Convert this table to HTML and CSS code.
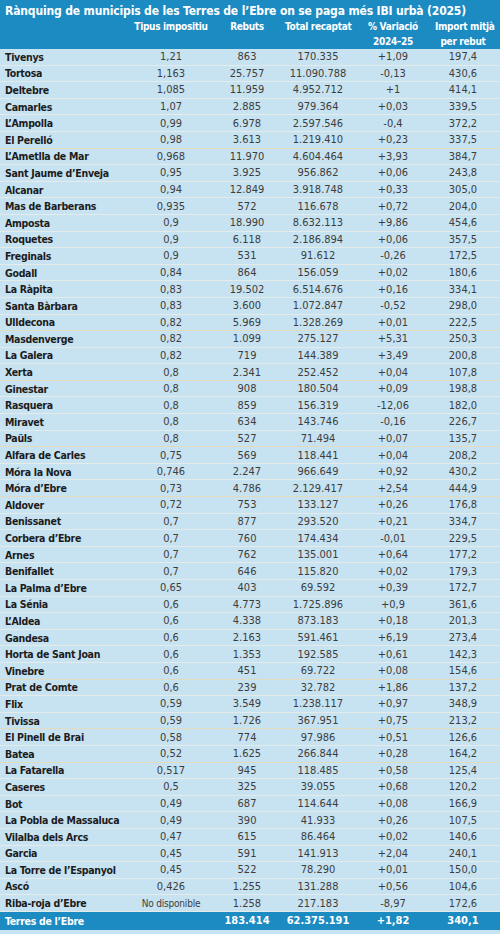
FILE: index.html
```html
<!DOCTYPE html>
<html lang="ca">
<head>
<meta charset="utf-8">
<title>Rànquing IBI urbà Terres de l'Ebre 2025</title>
<link rel="stylesheet" href="styles.css">
</head>
<body>
<div class="ranking">
    <div class="ranking-head">
        <h1 class="ranking-title">Rànquing de municipis de les Terres de l’Ebre on se paga més IBI urbà (2025)</h1>
        <div class="ranking-row ranking-cols">
            <span></span>
            <span>Tipus impositiu</span>
            <span>Rebuts</span>
            <span>Total recaptat</span>
            <span>% Variació<br>2024–25</span>
            <span>Import mitjà<br>per rebut</span>
        </div>
    </div>

    <div class="ranking-body">
        <div class="ranking-row"><span class="name">Tivenys</span><span>1,21</span><span>863</span><span>170.335</span><span>+1,09</span><span>197,4</span></div>
        <div class="ranking-row"><span class="name">Tortosa</span><span>1,163</span><span>25.757</span><span>11.090.788</span><span>-0,13</span><span>430,6</span></div>
        <div class="ranking-row"><span class="name">Deltebre</span><span>1,085</span><span>11.959</span><span>4.952.712</span><span>+1</span><span>414,1</span></div>
        <div class="ranking-row"><span class="name">Camarles</span><span>1,07</span><span>2.885</span><span>979.364</span><span>+0,03</span><span>339,5</span></div>
        <div class="ranking-row"><span class="name">L’Ampolla</span><span>0,99</span><span>6.978</span><span>2.597.546</span><span>-0,4</span><span>372,2</span></div>
        <div class="ranking-row tan"><span class="name">El Perelló</span><span>0,98</span><span>3.613</span><span>1.219.410</span><span>+0,23</span><span>337,5</span></div>
        <div class="ranking-row"><span class="name">L’Ametlla de Mar</span><span>0,968</span><span>11.970</span><span>4.604.464</span><span>+3,93</span><span>384,7</span></div>
        <div class="ranking-row"><span class="name">Sant Jaume d’Enveja</span><span>0,95</span><span>3.925</span><span>956.862</span><span>+0,06</span><span>243,8</span></div>
        <div class="ranking-row"><span class="name">Alcanar</span><span>0,94</span><span>12.849</span><span>3.918.748</span><span>+0,33</span><span>305,0</span></div>
        <div class="ranking-row"><span class="name">Mas de Barberans</span><span>0,935</span><span>572</span><span>116.678</span><span>+0,72</span><span>204,0</span></div>
        <div class="ranking-row"><span class="name">Amposta</span><span>0,9</span><span>18.990</span><span>8.632.113</span><span>+9,86</span><span>454,6</span></div>
        <div class="ranking-row"><span class="name">Roquetes</span><span>0,9</span><span>6.118</span><span>2.186.894</span><span>+0,06</span><span>357,5</span></div>
        <div class="ranking-row"><span class="name">Freginals</span><span>0,9</span><span>531</span><span>91.612</span><span>-0,26</span><span>172,5</span></div>
        <div class="ranking-row"><span class="name">Godall</span><span>0,84</span><span>864</span><span>156.059</span><span>+0,02</span><span>180,6</span></div>
        <div class="ranking-row"><span class="name">La Ràpita</span><span>0,83</span><span>19.502</span><span>6.514.676</span><span>+0,16</span><span>334,1</span></div>
        <div class="ranking-row"><span class="name">Santa Bàrbara</span><span>0,83</span><span>3.600</span><span>1.072.847</span><span>-0,52</span><span>298,0</span></div>
        <div class="ranking-row tan"><span class="name">Ulldecona</span><span>0,82</span><span>5.969</span><span>1.328.269</span><span>+0,01</span><span>222,5</span></div>
        <div class="ranking-row"><span class="name">Masdenverge</span><span>0,82</span><span>1.099</span><span>275.127</span><span>+5,31</span><span>250,3</span></div>
        <div class="ranking-row"><span class="name">La Galera</span><span>0,82</span><span>719</span><span>144.389</span><span>+3,49</span><span>200,8</span></div>
        <div class="ranking-row tan"><span class="name">Xerta</span><span>0,8</span><span>2.341</span><span>252.452</span><span>+0,04</span><span>107,8</span></div>
        <div class="ranking-row"><span class="name">Ginestar</span><span>0,8</span><span>908</span><span>180.504</span><span>+0,09</span><span>198,8</span></div>
        <div class="ranking-row"><span class="name">Rasquera</span><span>0,8</span><span>859</span><span>156.319</span><span>-12,06</span><span>182,0</span></div>
        <div class="ranking-row"><span class="name">Miravet</span><span>0,8</span><span>634</span><span>143.746</span><span>-0,16</span><span>226,7</span></div>
        <div class="ranking-row tan"><span class="name">Paüls</span><span>0,8</span><span>527</span><span>71.494</span><span>+0,07</span><span>135,7</span></div>
        <div class="ranking-row"><span class="name">Alfara de Carles</span><span>0,75</span><span>569</span><span>118.441</span><span>+0,04</span><span>208,2</span></div>
        <div class="ranking-row"><span class="name">Móra la Nova</span><span>0,746</span><span>2.247</span><span>966.649</span><span>+0,92</span><span>430,2</span></div>
        <div class="ranking-row tan"><span class="name">Móra d’Ebre</span><span>0,73</span><span>4.786</span><span>2.129.417</span><span>+2,54</span><span>444,9</span></div>
        <div class="ranking-row"><span class="name">Aldover</span><span>0,72</span><span>753</span><span>133.127</span><span>+0,26</span><span>176,8</span></div>
        <div class="ranking-row"><span class="name">Benissanet</span><span>0,7</span><span>877</span><span>293.520</span><span>+0,21</span><span>334,7</span></div>
        <div class="ranking-row"><span class="name">Corbera d’Ebre</span><span>0,7</span><span>760</span><span>174.434</span><span>-0,01</span><span>229,5</span></div>
        <div class="ranking-row"><span class="name">Arnes</span><span>0,7</span><span>762</span><span>135.001</span><span>+0,64</span><span>177,2</span></div>
        <div class="ranking-row"><span class="name">Benifallet</span><span>0,7</span><span>646</span><span>115.820</span><span>+0,02</span><span>179,3</span></div>
        <div class="ranking-row"><span class="name">La Palma d’Ebre</span><span>0,65</span><span>403</span><span>69.592</span><span>+0,39</span><span>172,7</span></div>
        <div class="ranking-row"><span class="name">La Sénia</span><span>0,6</span><span>4.773</span><span>1.725.896</span><span>+0,9</span><span>361,6</span></div>
        <div class="ranking-row"><span class="name">L’Aldea</span><span>0,6</span><span>4.338</span><span>873.183</span><span>+0,18</span><span>201,3</span></div>
        <div class="ranking-row"><span class="name">Gandesa</span><span>0,6</span><span>2.163</span><span>591.461</span><span>+6,19</span><span>273,4</span></div>
        <div class="ranking-row"><span class="name">Horta de Sant Joan</span><span>0,6</span><span>1.353</span><span>192.585</span><span>+0,61</span><span>142,3</span></div>
        <div class="ranking-row tan"><span class="name">Vinebre</span><span>0,6</span><span>451</span><span>69.722</span><span>+0,08</span><span>154,6</span></div>
        <div class="ranking-row"><span class="name">Prat de Comte</span><span>0,6</span><span>239</span><span>32.782</span><span>+1,86</span><span>137,2</span></div>
        <div class="ranking-row"><span class="name">Flix</span><span>0,59</span><span>3.549</span><span>1.238.117</span><span>+0,97</span><span>348,9</span></div>
        <div class="ranking-row tan"><span class="name">Tivissa</span><span>0,59</span><span>1.726</span><span>367.951</span><span>+0,75</span><span>213,2</span></div>
        <div class="ranking-row"><span class="name">El Pinell de Brai</span><span>0,58</span><span>774</span><span>97.986</span><span>+0,51</span><span>126,6</span></div>
        <div class="ranking-row tan"><span class="name">Batea</span><span>0,52</span><span>1.625</span><span>266.844</span><span>+0,28</span><span>164,2</span></div>
        <div class="ranking-row"><span class="name">La Fatarella</span><span>0,517</span><span>945</span><span>118.485</span><span>+0,58</span><span>125,4</span></div>
        <div class="ranking-row"><span class="name">Caseres</span><span>0,5</span><span>325</span><span>39.055</span><span>+0,68</span><span>120,2</span></div>
        <div class="ranking-row"><span class="name">Bot</span><span>0,49</span><span>687</span><span>114.644</span><span>+0,08</span><span>166,9</span></div>
        <div class="ranking-row"><span class="name">La Pobla de Massaluca</span><span>0,49</span><span>390</span><span>41.933</span><span>+0,26</span><span>107,5</span></div>
        <div class="ranking-row"><span class="name">Vilalba dels Arcs</span><span>0,47</span><span>615</span><span>86.464</span><span>+0,02</span><span>140,6</span></div>
        <div class="ranking-row"><span class="name">Garcia</span><span>0,45</span><span>591</span><span>141.913</span><span>+2,04</span><span>240,1</span></div>
        <div class="ranking-row"><span class="name">La Torre de l’Espanyol</span><span>0,45</span><span>522</span><span>78.290</span><span>+0,01</span><span>150,0</span></div>
        <div class="ranking-row"><span class="name">Ascó</span><span>0,426</span><span>1.255</span><span>131.288</span><span>+0,56</span><span>104,6</span></div>
        <div class="ranking-row"><span class="name">Riba-roja d’Ebre</span><span class="na">No disponible</span><span>1.258</span><span>217.183</span><span>-8,97</span><span>172,6</span></div>
    </div>

    <div class="ranking-row ranking-total">
        <span class="name">Terres de l’Ebre</span><span></span><span>183.414</span><span>62.375.191</span><span>+1,82</span><span>340,1</span>
    </div>
</div>
</body>
</html>
```

FILE: styles.css
```css
body {
    margin: 0;
    background-color: #c7e2f1;
    font-family: "DejaVu Sans", sans-serif;
    font-stretch: condensed;
}

div.ranking {
    width: 500px;
    overflow: hidden;
}

div.ranking-head {
    background-color: #1b8bc2;
    color: #ffffff;
    padding-top: 4px;
}

h1.ranking-title {
    margin: 0;
    padding-left: 5px;
    font-size: 12px;
    line-height: 15px;
    font-weight: bold;
    letter-spacing: -0.15px;
    white-space: nowrap;
}

div.ranking-row {
    display: grid;
    grid-template-columns: 133px 76px 76px 66px 84px 56px 1fr;
    align-items: center;
    height: 15.6px;
    border-bottom: 1px solid #e5ebe8;
    font-size: 11px;
    color: #3d3d3d;
    text-align: center;
    white-space: nowrap;
}

div.ranking-row.tan {
    border-bottom-color: #e4dbbf;
}

div.ranking-row span.name {
    text-align: left;
    padding-left: 5px;
    font-size: 10.5px;
    letter-spacing: -0.3px;
    font-weight: bold;
    color: #1c1c1c;
}

div.ranking-row span.na {
    font-size: 10px;
    letter-spacing: -0.2px;
}

div.ranking-cols {
    height: 30px;
    align-items: start;
    border-bottom: none;
    color: #ffffff;
    font-size: 10px;
    letter-spacing: -0.3px;
    font-weight: bold;
    line-height: 15px;
}

div.ranking-total {
    height: 18px;
    border-bottom: none;
    background-color: #1b8bc2;
    color: #ffffff;
    font-weight: bold;
}

div.ranking-total span.name {
    color: #ffffff;
}
```
